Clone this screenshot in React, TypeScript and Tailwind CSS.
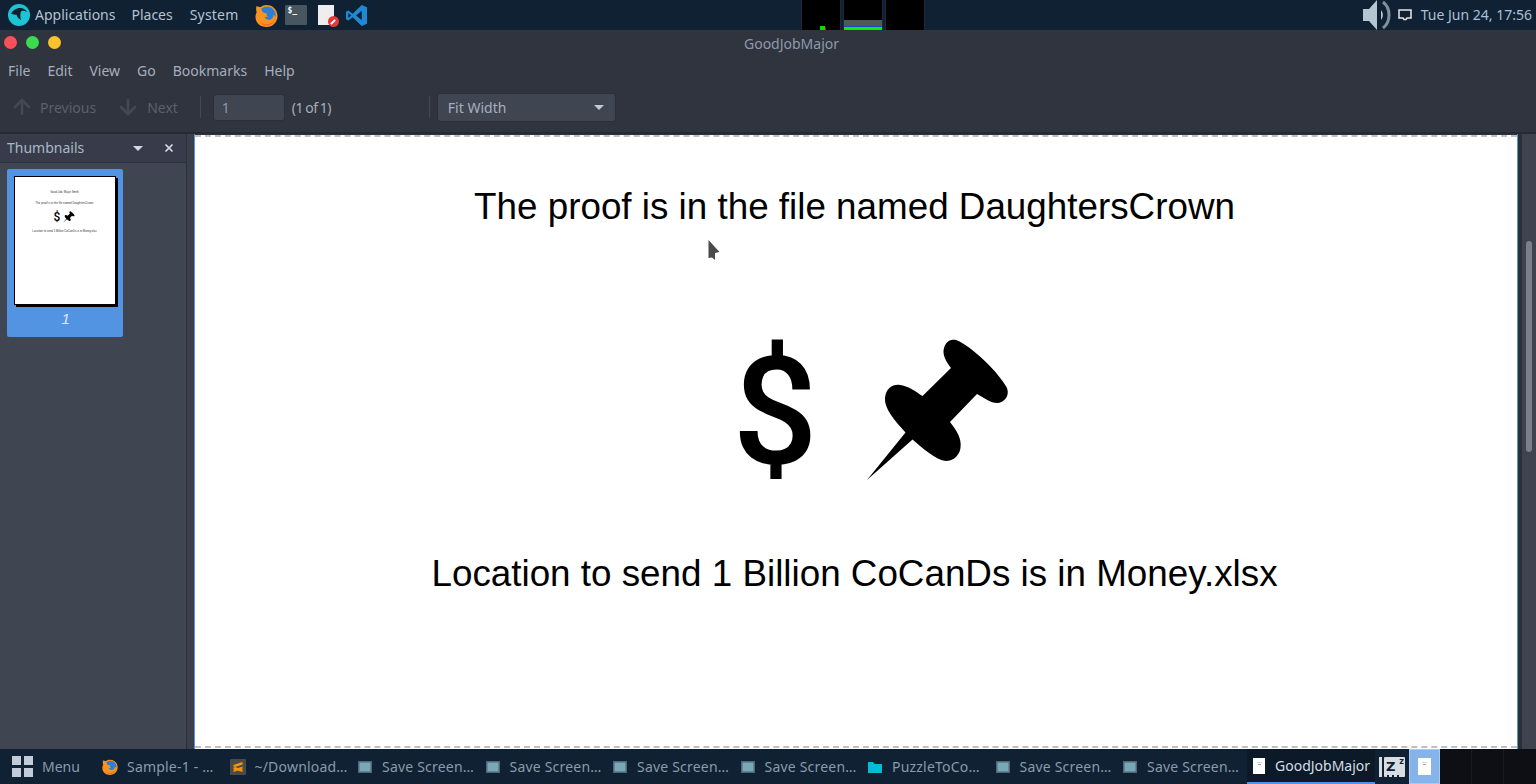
import { ArrowDown, ArrowUp, X } from 'lucide-react'

const menuItems = ['File', 'Edit', 'View', 'Go', 'Bookmarks', 'Help']

// taskbar entries, the active one is drawn apart
const tasks = [
  { icon: 'firefox', label: 'Sample-1 - …' },
  { icon: 'sublime', label: '~/Download…' },
  { icon: 'shot', label: 'Save Screen…' },
  { icon: 'shot', label: 'Save Screen…' },
  { icon: 'shot', label: 'Save Screen…' },
  { icon: 'shot', label: 'Save Screen…' },
  { icon: 'folder', label: 'PuzzleToCo…' },
  { icon: 'shot', label: 'Save Screen…' },
  { icon: 'shot', label: 'Save Screen…' },
]

const pinPath =
  'M3 144 41.500 96.500C30 84 20 72 21 62 22 52 29 48 36 49 44 50 51 55 58.500 60L87 32C82 25 78 19 80 12 82 5 87 3 92 4 108 10 136 38 143 52 146 60 140 67 133 67 127 67 120 62 113 58L86 86C92 94 98 102 96.500 112 95 121 88 125 82 125 72 124 58 112 48.500 103.500Z'

function FirefoxIcon({ size = 24 }: { size?: number }) {
  return (
    <svg width={size} height={size} viewBox="0 0 24 24">
      <path d="M1.500 2C1 5 1 7 1.800 8.500.8 10.500.5 12 .5 13.500.5 19.500 5.500 24 12 24c6.500 0 11.500-5 11.500-11.500C23.500 6 18.500 1 12 1 9.500 1 7.500 1.800 6 3 4.500 3 3 3 1.500 2z" fill="#f7931e" />
      <path d="M6.500 5C9 2.500 15 2 18.500 5c2.500 2.200 3.500 5 3 8.500-.8-1.300-1.500-2-2.300-2.300.4 2.300-.8 4.300-3 5-2.800.8-5.500-.6-6.200-3 1.500.6 2.700.4 3.500-.3-1.500-.8-1.800-2-1-3-2-.3-3.500-.5-4.500-1.500C7.500 7.500 7 6 6.500 5z" fill="#2b7fd8" />
      <path d="M5 18c3 3.500 8 4 11.500 2 2.500-1.400 4-3.500 4.500-5.500-.5 4.500-4.500 8-9 8-3 0-5.500-1.800-7-4.500z" fill="#f26a21" />
    </svg>
  )
}

function TaskIcon({ kind }: { kind: string }) {
  if (kind === 'firefox') return <FirefoxIcon size={16} />
  if (kind === 'sublime') {
    return (
      <svg width="16" height="16" viewBox="0 0 16 16">
        <rect width="16" height="16" rx="1" fill="#4a4a4a" />
        <path d="M3.500 6 12.500 3v2.500l-9 3zM3.500 10l9 3v-2.500l-9-3z" fill="#ff9800" />
        <path d="M3.500 10.500 12.500 7.500V10l-9 3z" fill="#f59300" />
      </svg>
    )
  }
  if (kind === 'folder') {
    return (
      <svg width="16" height="16" viewBox="0 0 16 16">
        <path d="M1 3h5l1.500 2H15v9H1z" fill="#00bcd4" />
      </svg>
    )
  }
  return (
    <svg width="14" height="12" viewBox="0 0 14 12">
      <rect width="14" height="12" fill="#526774" />
      <rect x="1.500" y="1.500" width="11" height="9" fill="#78a7b8" />
    </svg>
  )
}

function PageIcon({ w, h }: { w: number; h: number }) {
  return (
    <div className="flex flex-col items-center bg-white pt-[4px]" style={{ width: w, height: h }}>
      <div className="h-[1px] w-[5px] bg-gray-300" />
      <div className="mt-[1px] h-[1px] w-[3px] bg-gray-400" />
    </div>
  )
}

function MiniGraph({ children }: { children?: React.ReactNode }) {
  return <div className="relative h-[30px] w-[40px] border-x border-[#1d2838] bg-black">{children}</div>
}

export default function App() {
  return (
    <div className="relative flex h-[784px] w-[1536px] flex-col overflow-hidden bg-[#2f343f] font-['Noto_Sans',sans-serif] text-[14px] text-[#a9b4c4]">
      {/* top panel */}
      <div className="relative flex h-[30px] shrink-0 items-center bg-[#0f2133] pl-[8px] pr-[4px]">
        <svg width="22" height="22" viewBox="0 0 22 22">
          <circle cx="11" cy="11" r="11" fill="#1cc4d6" />
          <path d="M3 9.500C5 6 9 3.500 13 4c3 .4 5 2 6 4-2-1.200-4-1.500-5.500-1-1.500 2-1.500 5-.5 9-2.500-1-4-3-4.500-5.500C6.500 11 4.500 10.500 3 9.500z" fill="#10202c" />
        </svg>
        <span className="mb-[2px] ml-[5px] text-[#b6c2d0]">Applications</span>
        <span className="mb-[2px] ml-[16px] text-[#b6c2d0]">Places</span>
        <span className="mb-[2px] ml-[17px] tracking-[0.2px] text-[#b6c2d0]">System</span>
        <div className="ml-[16px]">
          <FirefoxIcon size={23} />
        </div>
        <div className="ml-[7px] flex h-[20px] w-[22px] items-start rounded-[1px] bg-[#47565f] pl-[3px] font-['DejaVu_Sans_Mono',monospace] text-[8px] font-bold leading-[12px] text-white">
          $_
        </div>
        <div className="relative ml-[11px] h-[20px] w-[16px] bg-[#eeeeee]">
          <div className="absolute -bottom-[2px] -right-[5px] flex h-[11px] w-[11px] items-center justify-center rounded-full bg-[#e53935]">
            <div className="h-[2px] w-[6px] -rotate-45 bg-white" />
          </div>
        </div>
        <svg className="ml-[11px]" width="23" height="23" viewBox="0 0 24 24">
          <path d="M17.500 1 8 10.200 3.500 6.800 1 8v8l2.500 1.200L8 13.800l9.500 9.200L23 20.500V3.500zM17.500 7v10l-6-5zM3.500 9.500 6.500 12l-3 2.500z" fill="#1f8ad2" fillRule="evenodd" />
        </svg>

        <div className="absolute left-[801px] top-0 flex gap-[2px]">
          <MiniGraph>
            <div className="absolute bottom-0 left-[18px] h-[4px] w-[5px] bg-[#00e000]" />
            <div className="absolute bottom-0 left-[23px] h-[3px] w-[1px] bg-[#e00000]" />
          </MiniGraph>
          <MiniGraph>
            <div className="absolute bottom-[4px] left-0 h-[6px] w-full bg-[#4d5a55]" />
            <div className="absolute bottom-[3px] left-0 h-[1px] w-full bg-[#2040d0]" />
            <div className="absolute bottom-0 left-0 h-[3px] w-full bg-[#00f000]" />
          </MiniGraph>
          <MiniGraph />
        </div>

        <div className="ml-auto flex items-center">
          <svg width="30" height="30" viewBox="0 0 30 30">
            <path d="M0 9h6l8-9v30l-8-9H0z" fill="#b4c6cf" />
            <path d="M18 10c2.500 3 2.500 7 0 10z" fill="#b4c6cf" />
            <path d="M20 2c8 6 8 20 0 26" fill="none" stroke="#7f939e" strokeWidth="3" />
          </svg>
          <svg className="ml-[5px]" width="14" height="12" viewBox="0 0 14 12">
            <path d="M1 1h12v8H9l-1 1.500H6L5 9H1z" fill="none" stroke="#e8e8e8" strokeWidth="1.500" />
          </svg>
          <span className="mb-[2px] ml-[9px] whitespace-nowrap text-[#a9c0d6]">Tue Jun 24, 17:56</span>
        </div>
      </div>

      {/* title bar */}
      <div className="relative flex h-[28px] shrink-0 items-center justify-center">
        <div className="absolute left-[4px] top-[6px] flex gap-[9px]">
          <div className="h-[13px] w-[13px] rounded-full bg-[#f9505a]" />
          <div className="h-[13px] w-[13px] rounded-full bg-[#3adb4c]" />
          <div className="h-[13px] w-[13px] rounded-full bg-[#fcc22e]" />
        </div>
        <span className="ml-[47px] mt-[-2px] text-[#8d9aac]">GoodJobMajor</span>
      </div>

      {/* menu bar */}
      <div className="flex h-[26px] shrink-0 items-center gap-[17px] pb-[2px] pl-[8px] text-[#a5afbd]">
        {menuItems.map((item) => (
          <span key={item}>{item}</span>
        ))}
      </div>

      {/* toolbar */}
      <div className="flex h-[50px] shrink-0 items-center border-b-2 border-[#262a33] pb-[2px] pl-[10px]">
        <ArrowUp size={24} strokeWidth={2.5} className="text-[#444955]" />
        <span className="ml-[6px] text-[#5a606c]">Previous</span>
        <ArrowDown size={24} strokeWidth={2.5} className="ml-[20px] text-[#444955]" />
        <span className="ml-[7px] text-[#5a606c]">Next</span>
        <div className="ml-[22px] h-[22px] w-px bg-[#434854]" />
        <div className="ml-[12px] flex h-[27px] w-[72px] items-center rounded-[3px] border border-[#2b2f39] bg-[#404552] pl-[8px] text-[#8f99a8]">
          1
        </div>
        <span className="ml-[7px] tracking-[-0.5px] text-[#a5afbd] [word-spacing:-1px]">(1 of 1)</span>
        <div className="ml-[98px] h-[22px] w-px bg-[#434854]" />
        <div className="ml-[7px] flex h-[29px] w-[179px] items-center justify-between rounded-[3px] border border-[#2b2f39] bg-[#404552] pl-[10px] pr-[11px] text-[#a5afbd]">
          <span>Fit Width</span>
          <div className="h-0 w-0 border-x-[5px] border-t-[5px] border-x-transparent border-t-[#c4cad4]" />
        </div>
      </div>

      {/* main area */}
      <div className="flex min-h-0 flex-1">
        {/* sidebar */}
        <div className="flex w-[186px] shrink-0 flex-col">
          <div className="flex h-[29px] shrink-0 items-center border-b border-[#2b2f39] bg-[#383c4a] pl-[7px] pr-[11px] text-[#a9b8c8]">
            <span className="mt-[-2px]">Thumbnails</span>
            <div className="ml-auto h-0 w-0 border-x-[5px] border-t-[5px] border-x-transparent border-t-[#d3dae3]" />
            <X size={12} strokeWidth={3.5} className="ml-[20px] text-[#d3dae3]" />
          </div>
          <div className="min-h-0 flex-1 bg-[#404552] pl-[7px] pt-[6px]">
            <div className="flex h-[168px] w-[116px] flex-col rounded-[2px] bg-[#5294e2] pl-[6.500px] pt-[7px]">
              <div className="flex h-[129px] w-[102px] flex-col items-center border border-black bg-white pt-[13px] font-['Liberation_Sans',sans-serif] text-[2.800px] leading-[4px] text-[#333333] shadow-[2px_2px_0_#000]">
                <span>Good Job, Major Smith</span>
                <span className="mt-[7px]">The proof is in the file named DaughtersCrown</span>
                <div className="mt-[5px] flex h-[14px] items-center gap-[3px] text-black">
                  <span className="font-['Roboto',sans-serif] text-[12px] font-medium leading-[14px]">$</span>
                  <svg width="12" height="12" viewBox="0 0 150 150">
                    <path d={pinPath} />
                  </svg>
                </div>
                <span className="mt-[5px]">Location to send 1 Billion CoCanDs is in Money.xlsx</span>
              </div>
              <span className="ml-[48px] mt-[4px] font-['Liberation_Sans',sans-serif] text-[15px] italic leading-[20px] text-[#dce9f8]">1</span>
            </div>
          </div>
        </div>
        <div className="w-[1px] shrink-0 bg-[#2b2f39]" />

        {/* splitter */}
        <div className="w-[7px] shrink-0 bg-[#3a3f4b]" />
        <div className="w-[1px] shrink-0 bg-[#5294e2]" />

        {/* document */}
        <div className="relative flex min-w-0 flex-1 flex-col items-center bg-white font-['Liberation_Sans',sans-serif] text-black">
          <div className="h-[1px] w-full bg-[#2f343f]" />
          <div className="w-full border-t-2 border-dashed border-[#c0c0c0]" />
          <p className="mr-[3px] mt-[48px] whitespace-nowrap text-[36.800px] leading-[43px]">The proof is in the file named DaughtersCrown</p>
          <div className="ml-[34px] mt-[108px] flex h-[148px] items-start">
            <span className="mt-[-10px] w-[71px] text-center font-['Roboto',sans-serif] text-[150px] font-medium leading-[172px]">$</span>
            <svg width="150" height="150" viewBox="0 0 150 150" className="ml-[60px]">
              <path d={pinPath} />
            </svg>
          </div>
          <p className="mr-[3px] mt-[68px] whitespace-nowrap text-[36.800px] leading-[43px]">Location to send 1 Billion CoCanDs is in Money.xlsx</p>
          <div className="absolute bottom-[1px] w-full border-t-2 border-dashed border-[#c0c0c0]" />
          {/* mouse pointer */}
          <svg className="absolute left-[512px] top-[105px]" width="14" height="22" viewBox="0 0 14 22">
            <path d="M1.500 1 12.500 13 8 14 8 21 5 18.500 1.500 19z" fill="#4a4a4a" />
          </svg>
        </div>

        {/* scrollbar gutter */}
        <div className="w-[1px] shrink-0 bg-[#5294e2]" />
        <div className="w-[4px] shrink-0 bg-[#2b2f39]" />
        <div className="w-[14px] shrink-0 bg-[#3e434f] pl-[4px] pt-[107px]">
          <div className="h-[211px] w-[6px] rounded-full bg-[#7a7f8b]" />
        </div>
      </div>

      {/* bottom panel */}
      <div className="flex h-[35px] shrink-0 items-stretch bg-[#0f2133] text-[#8a9bab]">
        <div className="flex w-[96px] items-center pl-[12px]">
          <div className="grid grid-cols-2 gap-[3px]">
            <div className="h-[9px] w-[9px] bg-[#c2cbd8]" />
            <div className="h-[9px] w-[9px] bg-[#c2cbd8]" />
            <div className="h-[9px] w-[9px] bg-[#c2cbd8]" />
            <div className="h-[9px] w-[9px] bg-[#c2cbd8]" />
          </div>
          <span className="ml-[9px]">Menu</span>
        </div>
        {tasks.map((task, index) => (
          <div key={index} className="flex w-[127.500px] shrink-0 items-center pl-[6px]">
            <div className="flex w-[16px] justify-center">
              <TaskIcon kind={task.icon} />
            </div>
            <span className="ml-[9px] whitespace-nowrap tracking-[0.2px]">{task.label}</span>
          </div>
        ))}
        <div className="ml-[3.500px] flex w-[128px] shrink-0 items-center border-b-2 border-[#5294e2] bg-[#0c1a28] pl-[6px] text-[#d5dde6]">
          <PageIcon w={12} h={16} />
          <span className="ml-[10px] whitespace-nowrap">GoodJobMajor</span>
        </div>
        <div className="ml-[4px] flex w-[26px] items-center gap-[2px]">
          <div className="h-[20px] w-[3px] bg-[#d8dde2]" />
          <div className="relative h-[20px] w-[21px] rounded-[1px] bg-[#d8dde2] pl-[2px] font-['DejaVu_Sans',sans-serif] text-[13px] font-bold leading-[19px] text-[#0f2133]">
            Z
            <span className="absolute right-[1px] top-[1px] text-[8px] leading-[8px]">z</span>
            <div className="absolute bottom-0 left-[3px] flex gap-[3px]">
              <div className="h-[2px] w-[2px] bg-[#0f2133]" />
              <div className="h-[2px] w-[2px] bg-[#0f2133]" />
              <div className="h-[2px] w-[2px] bg-[#0f2133]" />
            </div>
          </div>
        </div>
        <div className="ml-[4px] flex w-[31px] items-center justify-center border border-[#a9c9f0] bg-[#85b3ea]">
          <PageIcon w={13} h={17} />
        </div>
        <div className="flex flex-1 bg-[#0d0f14]">
          <div className="w-[32px] border-r border-[#181b21]" />
          <div className="w-[32px] border-r border-[#181b21]" />
        </div>
      </div>
    </div>
  )
}
